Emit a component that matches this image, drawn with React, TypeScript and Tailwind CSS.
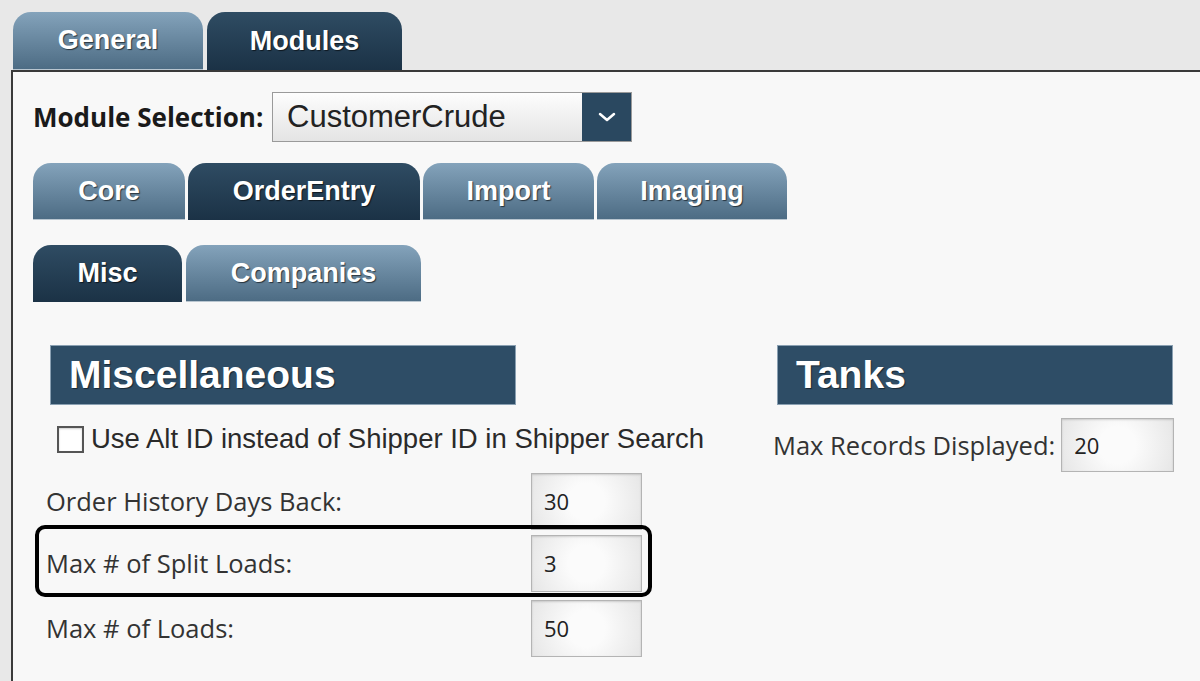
import React from "react";
import clsx from "clsx";

const SANS = "font-['Liberation_Sans',Arial,sans-serif]";
const UI = "font-['Open_Sans','Noto_Sans',sans-serif]";

interface TabProps {
  label: string;
  active?: boolean;
  width: string;
}

const Tab: React.FC<TabProps> = ({ label, active, width }) => (
  <div
    className={clsx(
      "h-full rounded-t-[18px] flex items-center justify-center text-[27px] font-bold text-white",
      "[text-shadow:1px_1px_1px_rgba(0,0,0,0.6)]",
      SANS,
      width,
      active
        ? "bg-gradient-to-b from-[#2f4c63] to-[#1b3246]"
        : "bg-gradient-to-b from-[#84a3bb] to-[#4d6c84] border-b border-[#b9c6d0]",
    )}
  >
    {label}
  </div>
);

const ValueBox: React.FC<{ value: string; className?: string }> = ({
  value,
  className,
}) => (
  <div
    className={clsx(
      "border border-[#b4b4b4] bg-[radial-gradient(circle,#fbfbfb_30%,#e6e6e6_100%)] shadow-[inset_0_1px_2px_rgba(0,0,0,0.15)] flex items-center pl-[12px] text-[22px] text-[#222]",
      UI,
      className,
    )}
  >
    {value}
  </div>
);

const SectionHeader: React.FC<{ title: string; width: string }> = ({
  title,
  width,
}) => (
  <div
    className={clsx(
      "h-[60px] bg-[#2e4d66] border border-[#8aa0b2] flex items-center pl-[18px] text-[39px] font-bold text-white [text-shadow:1px_1px_1px_rgba(0,0,0,0.5)]",
      SANS,
      width,
    )}
  >
    {title}
  </div>
);

const SettingRow: React.FC<{ label: string; value: string }> = ({
  label,
  value,
}) => (
  <div className="flex items-center h-[57px] pl-[9px]">
    <div className={clsx("w-[485px] text-[25.5px] text-[#333]", UI)}>{label}</div>
    <ValueBox value={value} className="w-[111px] h-[57px]" />
  </div>
);

export default function App() {
  return (
    <div className="w-[1200px] h-[681px] overflow-hidden bg-[#e8e8e8] pl-[11px] flex flex-col">
      {/* Top tabs */}
      <div className="flex gap-[4px] pl-[2px] pt-[12px] h-[70px]">
        <Tab label="General" width="w-[190px]" />
        <Tab label="Modules" width="w-[195px]" active />
      </div>

      {/* Panel */}
      <div className="flex-1 bg-[#f8f8f8] border-l-[2px] border-t-[2px] border-[#3a3a3a] pl-[20px]">
        {/* Module selection */}
        <div className="flex items-center mt-[20px] h-[50px]">
          <div className={clsx("text-[26px] font-bold text-[#1a1a1a] w-[239px]", UI)}>
            Module Selection:
          </div>
          <div className="w-[360px] h-[50px] border border-[#9a9a9a] flex bg-gradient-to-b from-[#fdfdfd] to-[#e4e4e4]">
            <div className={clsx("flex-1 flex items-center pl-[14px] text-[31px] text-[#222]", SANS)}>
              CustomerCrude
            </div>
            <div className="w-[49px] h-full bg-[#2a4860] flex items-center justify-center">
              <svg width="22" height="14" viewBox="0 0 22 14" fill="none">
                <path d="M4 4l7 6 7-6" stroke="white" strokeWidth="2.5" strokeLinecap="round" strokeLinejoin="round" />
              </svg>
            </div>
          </div>
        </div>

        {/* Second-level tabs */}
        <div className="flex gap-[3px] mt-[21px] h-[57px]">
          <Tab label="Core" width="w-[152px]" />
          <Tab label="OrderEntry" width="w-[232px]" active />
          <Tab label="Import" width="w-[171px]" />
          <Tab label="Imaging" width="w-[190px]" />
        </div>

        {/* Third-level tabs */}
        <div className="flex gap-[4px] mt-[25px] h-[57px]">
          <Tab label="Misc" width="w-[149px]" active />
          <Tab label="Companies" width="w-[235px]" />
        </div>

        {/* Sections */}
        <div className="flex mt-[43px]">
          {/* Miscellaneous */}
          <div className="w-[744px] flex flex-col">
            <div className="pl-[17px]">
              <SectionHeader title="Miscellaneous" width="w-[466px]" />
            </div>
            <label className="flex items-center mt-[20px] pl-[24px] h-[28px]">
              <span className="w-[27px] h-[27px] border-[2px] border-[#555] bg-white shadow-[inset_0_1px_2px_rgba(0,0,0,0.2)]" />
              <span className={clsx("ml-[7px] text-[27.5px] text-[#2a2a2a] leading-none", SANS)}>
                Use Alt ID instead of Shipper ID in Shipper Search
              </span>
            </label>
            <div className="relative flex flex-col mt-[20px] pl-[4px]">
              <SettingRow label="Order History Days Back:" value="30" />
              <div className="mt-[5px]">
                <SettingRow label="Max # of Split Loads:" value="3" />
              </div>
              <div className="mt-[8px]">
                <SettingRow label="Max # of Loads:" value="50" />
              </div>
              {/* annotation highlight */}
              <div className="absolute left-[2px] top-[52px] w-[617px] h-[72px] border-[4px] border-black rounded-[10px] pointer-events-none" />
            </div>
          </div>

          {/* Tanks */}
          <div className="flex flex-col">
            <SectionHeader title="Tanks" width="w-[396px]" />
            <div className="flex items-center mt-[13px] ml-[-4px]">
              <div className={clsx("text-[25.5px] text-[#333] mr-[6px]", UI)}>
                Max Records Displayed:
              </div>
              <ValueBox value="20" className="w-[113px] h-[54px]" />
            </div>
          </div>
        </div>
      </div>
    </div>
  );
}
